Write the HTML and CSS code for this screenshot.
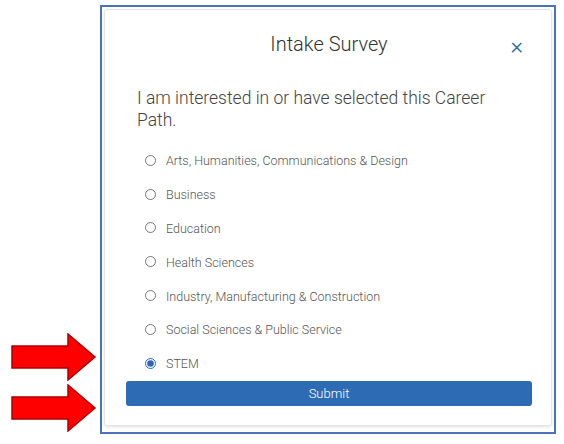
FILE: index.html
```html
<!DOCTYPE html>
<html lang="en">
<head>
    <meta charset="UTF-8">
    <meta name="viewport" content="width=device-width, initial-scale=1.0">
    <title>Intake Survey</title>
    <link rel="stylesheet" href="styles.css">
</head>
<body>
    <div class="frame">
        <div class="card">
            <div class="card-header">
                <h1>Intake Survey</h1>
                <span class="close">&times;</span>
            </div>
            <p class="question">I am interested in or have selected this Career Path.</p>
            <div class="options">
                <label class="option"><input type="radio" name="path"> Arts, Humanities, Communications &amp; Design</label>
                <label class="option"><input type="radio" name="path"> Business</label>
                <label class="option"><input type="radio" name="path"> Education</label>
                <label class="option"><input type="radio" name="path"> Health Sciences</label>
                <label class="option"><input type="radio" name="path"> Industry, Manufacturing &amp; Construction</label>
                <label class="option"><input type="radio" name="path"> Social Sciences &amp; Public Service</label>
                <label class="option"><input type="radio" name="path" checked> STEM</label>
            </div>
            <button class="submit">Submit</button>
        </div>
    </div>

    <!-- annotation arrows -->
    <svg class="arrow arrow-one" width="86" height="48" viewBox="0 0 86 48">
        <polygon points="1,13 57,13 57,1 84,24 57,47 57,35 1,35" fill="#ff0000" stroke="#b00000" stroke-width="1.5"/>
    </svg>
    <svg class="arrow arrow-two" width="86" height="48" viewBox="0 0 86 48">
        <polygon points="1,13 57,13 57,1 84,24 57,47 57,35 1,35" fill="#ff0000" stroke="#b00000" stroke-width="1.5"/>
    </svg>
</body>
</html>
```

FILE: styles.css
```css
body {
    font-family: Roboto, "Liberation Sans", sans-serif;
    background-color: #fff;
    color: #333;
    margin: 0;
    padding: 5px 0 0 100px;
}
.frame {
    width: 448px;
    height: 421px;
    border: 2px solid #4a72bd;
    padding: 2px;
    box-sizing: content-box;
}
.card {
    box-sizing: border-box;
    height: 417px;
    border: 1px solid #e4e4e4;
    border-radius: 3px;
    box-shadow: 0 1px 3px rgba(0, 0, 0, 0.12);
    padding: 22px 19px 0 21px;
}
.card-header {
    position: relative;
    text-align: center;
}
.card-header h1 {
    margin: 0;
    font-size: 20px;
    font-weight: 300;
    line-height: 25px;
    color: #333;
}
.close {
    position: absolute;
    right: 9px;
    top: 2px;
    font-size: 24px;
    font-weight: 300;
    line-height: 24px;
    color: #2c68b2;
}
.question {
    margin: 30px 0 13px 11px;
    max-width: 360px;
    font-size: 17.5px;
    font-weight: 300;
    line-height: 22px;
    color: #444;
}
.options {
    display: flex;
    flex-direction: column;
    padding-left: 19px;
}
.option {
    display: flex;
    align-items: center;
    height: 33.8px;
    font-size: 12.5px;
    font-weight: 300;
    color: #555;
}
.option input {
    margin: 0 10px 1px 0;
    width: 11px;
    height: 11px;
    accent-color: #2c68b2;
}
.submit {
    display: block;
    width: 100%;
    height: 25px;
    background-color: #2d6cb5;
    color: #fff;
    border: none;
    border-radius: 3px;
    font-family: inherit;
    font-size: 13px;
    font-weight: 300;
}
.arrow {
    position: absolute;
    left: 11px;
}
.arrow-one {
    top: 333px;
}
.arrow-two {
    top: 384px;
}
```
